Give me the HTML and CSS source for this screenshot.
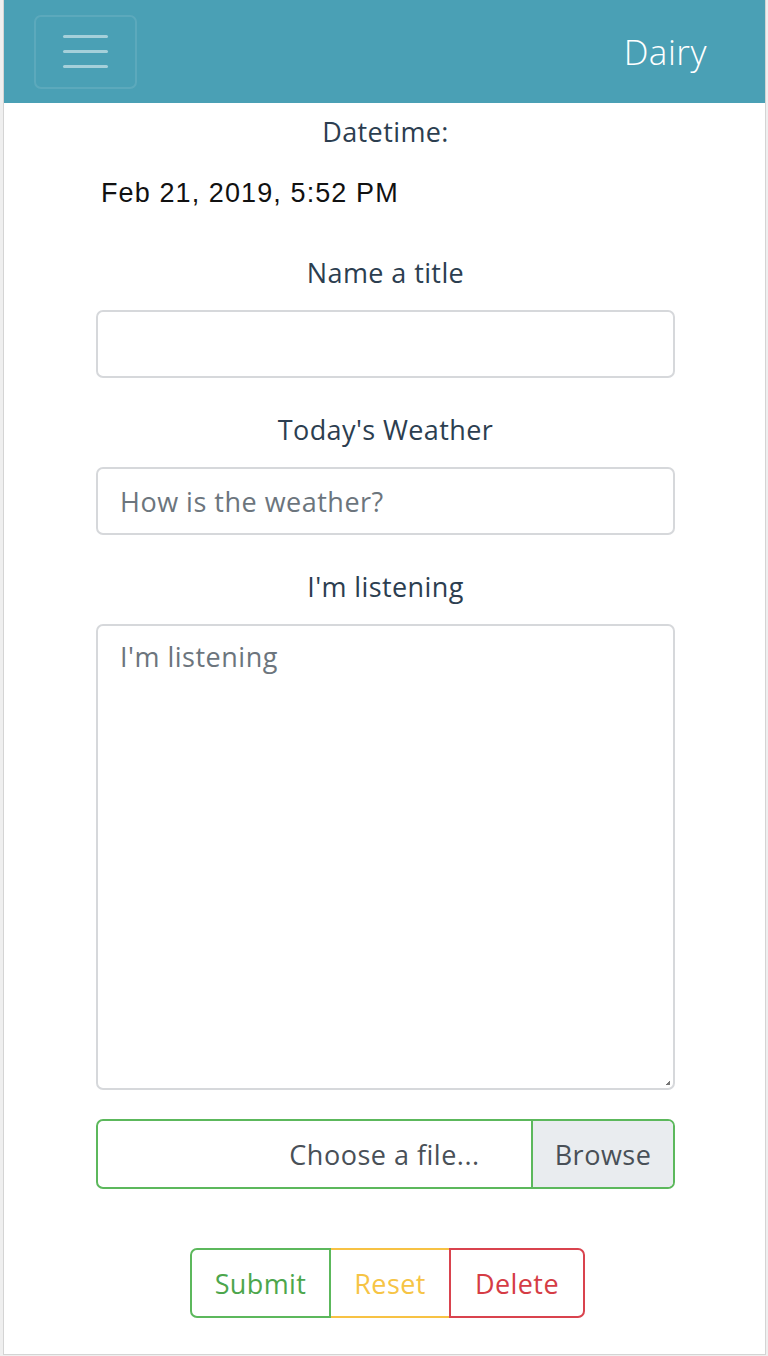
FILE: index.html
```html
<!DOCTYPE html>
<html>
<head>
<meta charset="utf-8">
<link rel="stylesheet" href="styles.css">
</head>
<body>
<div class="page">
  <header class="navbar">
    <button class="toggler" type="button" aria-label="menu">
      <span class="bar"></span><span class="bar"></span><span class="bar"></span>
    </button>
    <div class="brand">Dairy</div>
  </header>
  <main class="form">
    <div class="label first">Datetime:</div>
    <div class="date">Feb 21, 2019, 5:52 PM</div>
    <div class="label">Name a title</div>
    <div class="input"></div>
    <div class="label">Today's Weather</div>
    <div class="input"><span class="ph">How is the weather?</span></div>
    <div class="label">I'm listening</div>
    <div class="textarea"><span class="ph">I'm listening</span><span class="grip"></span></div>
    <div class="file">
      <div class="file-text">Choose a file...</div>
      <div class="file-btn">Browse</div>
    </div>
    <div class="actions">
      <div class="btn green">Submit</div>
      <div class="btn yellow">Reset</div>
      <div class="btn red">Delete</div>
    </div>
  </main>
</div>
</body>
</html>
```
FILE: styles.css
```css
html, body { margin: 0; padding: 0; }
body {
  background: #efefef;
  font-family: "Open Sans", "Noto Sans", sans-serif;
  width: 768px;
  height: 1356px;
  overflow: hidden;
}
.page {
  margin-left: 3px;
  width: 763px;
  height: 1355px;
  background: #fff;
  border-left: 1px solid #d4d4d4;
  border-right: 1px solid #d4d4d4;
  border-bottom: 1px solid #d4d4d4;
  box-sizing: border-box;
}
.navbar {
  height: 103px;
  background: #4aa0b5;
  display: flex;
  align-items: center;
  justify-content: space-between;
  padding: 0 58px 0 30px;
  box-sizing: border-box;
}
.toggler {
  width: 103px;
  height: 74px;
  border: 2px solid rgba(255,255,255,0.1);
  border-radius: 7px;
  background: transparent;
  display: flex;
  flex-direction: column;
  align-items: center;
  justify-content: center;
  gap: 12px;
  padding: 0;
}
.bar {
  display: block;
  width: 45px;
  height: 3px;
  border-radius: 2px;
  background: rgba(255,255,255,0.5);
}
.brand {
  color: #fff;
  font-size: 35px;
  font-weight: 300;
  letter-spacing: 0.5px;
}
.form {
  width: 579px;
  margin: 0 auto;
  padding-left: 2px;
  display: flex;
  flex-direction: column;
  align-items: stretch;
}
.label {
  text-align: center;
  color: #2c3e50;
  font-size: 27px;
  font-weight: 400;
  letter-spacing: 0.4px;
  line-height: 36px;
  margin-top: 34px;
  margin-bottom: 19px;
}
.label.first { margin-top: 11px; margin-bottom: 0; }
.label.tight { margin-top: 33px; }
.date {
  font-family: "Liberation Sans", Arial, sans-serif;
  font-size: 27px;
  letter-spacing: 1.1px;
  line-height: 40px;
  color: #111;
  padding-left: 5px;
  margin-top: 23px;
  margin-bottom: 8px;
}
.input {
  height: 68px;
  border: 2px solid #d6d8db;
  border-radius: 7px;
  box-sizing: border-box;
  display: flex;
  align-items: center;
  padding-left: 22px;
}
.ph {
  color: #6c757d;
  font-size: 27px;
  letter-spacing: 0.5px;
}
.textarea {
  height: 466px;
  border: 2px solid #d6d8db;
  border-radius: 7px;
  box-sizing: border-box;
  padding: 13px 22px;
  position: relative;
  line-height: 36px;
}
.grip {
  position: absolute;
  right: 3px;
  bottom: 3px;
  width: 4px;
  height: 4px;
  background: linear-gradient(135deg, transparent 50%, #777 50%);
}
.file {
  margin-top: 29px;
  height: 70px;
  border: 2px solid #5cb85c;
  border-radius: 7px;
  box-sizing: border-box;
  display: flex;
  overflow: hidden;
}
.file-text {
  flex: 1;
  display: flex;
  align-items: center;
  justify-content: center;
  padding-left: 140px;
  color: #495057;
  font-size: 27px;
  letter-spacing: 0.5px;
  border-right: 2px solid #5cb85c;
}
.file-btn {
  width: 140px;
  background: #e9ecef;
  display: flex;
  align-items: center;
  justify-content: center;
  color: #495057;
  font-size: 27px;
  letter-spacing: 0.5px;
}
.actions {
  margin-top: 59px;
  display: flex;
  justify-content: center;
  padding-left: 4px;
}
.btn {
  height: 70px;
  box-sizing: border-box;
  display: flex;
  align-items: center;
  justify-content: center;
  font-size: 27px;
  letter-spacing: 0.4px;
  border: 2px solid;
}
.btn.green { width: 141px; color: #4ca64c; border-color: #5cb85c; border-radius: 7px 0 0 7px; }
.btn.yellow { width: 118px; color: #f6c445; border-color: #f7c244; border-left: 0; border-right: 0; }
.btn.red { width: 136px; color: #d53c45; border-color: #d9434e; border-radius: 0 7px 7px 0; }
```
